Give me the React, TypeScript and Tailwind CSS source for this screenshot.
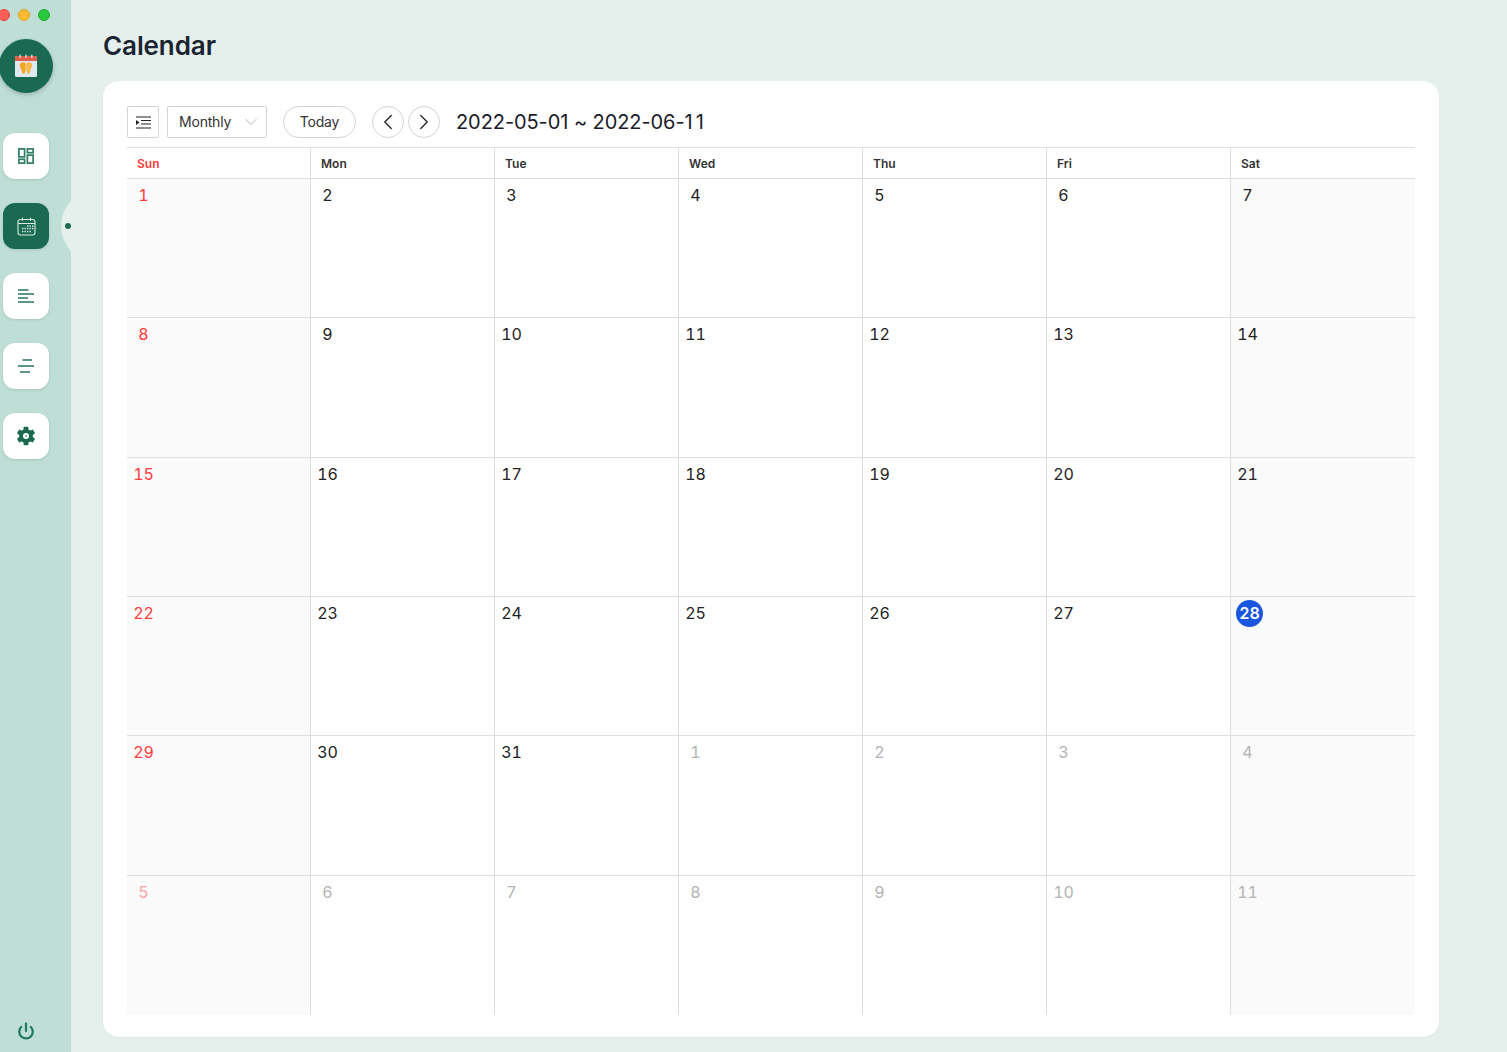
import { ChevronDown, ChevronLeft, ChevronRight, Power } from "lucide-react"

const green = "#196a50"

const weekdays = ["Sun", "Mon", "Tue", "Wed", "Thu", "Fri", "Sat"]

const days = [
  1, 2, 3, 4, 5, 6, 7,
  8, 9, 10, 11, 12, 13, 14,
  15, 16, 17, 18, 19, 20, 21,
  22, 23, 24, 25, 26, 27, 28,
  29, 30, 31, 1, 2, 3, 4,
  5, 6, 7, 8, 9, 10, 11,
]

function LogoIcon() {
  return (
    <svg width="24" height="24" viewBox="0 0 24 24">
      <rect x="1" y="2" width="22" height="21" rx="1.5" fill="#dfe9f2" />
      <path d="M1 3.500A1.500 1.500 0 0 1 2.500 2h19A1.500 1.500 0 0 1 23 3.500V7H1z" fill="#e0604c" />
      <rect x="5.500" y="0.500" width="1.300" height="3.500" rx="0.600" fill="#dfe3e6" />
      <rect x="11.400" y="0.500" width="1.300" height="3.500" rx="0.600" fill="#dfe3e6" />
      <rect x="17.200" y="0.500" width="1.300" height="3.500" rx="0.600" fill="#dfe3e6" />
      <path d="M11.700 9.200C10 7.900 5.800 7.500 5.800 11.300c0 2.200 1.500 3.200 1.800 4.800.3 1.500.5 4 2.100 4 1.400 0 1.200-2.800 2-3.500z" fill="#f6a623" />
      <path d="M12.300 9.200C14 7.900 18.200 7.500 18.200 11.300c0 2.200-1.500 3.200-1.800 4.800-.3 1.500-.5 4-2.100 4-1.400 0-1.200-2.800-2-3.500z" fill="#f9b94a" />
    </svg>
  )
}

function DashboardIcon() {
  return (
    <svg width="16" height="16" viewBox="0 0 16 16" fill="none" stroke="#2f7d64" strokeWidth="1.700">
      <rect x="0.900" y="0.900" width="5.700" height="8" />
      <rect x="9.400" y="0.900" width="5.700" height="3.800" />
      <rect x="0.900" y="11.300" width="5.700" height="3.800" />
      <rect x="9.400" y="7.100" width="5.700" height="8" />
    </svg>
  )
}

function CalendarIcon() {
  return (
    <svg width="19" height="19" viewBox="0 0 19 19" fill="none" stroke="#dcebe6" strokeWidth="1.100">
      <rect x="1" y="2.500" width="17" height="15.500" rx="2.500" />
      <path d="M1 6.500h17M5.500 .8v3M13.500 .8v3" />
      <path
        d="M10 9h1.400M12.500 9h1.400M15 9h1.400M5 11.500h1.400M7.500 11.500h1.400M10 11.500h1.400M12.500 11.500h1.400M15 11.500h1.400M5 14.500h1.400M7.500 14.500h1.400M10 14.500h1.400M12.500 14.500h1.400"
        strokeWidth="1.500"
      />
    </svg>
  )
}

function AlignLeftIcon() {
  return (
    <svg width="16" height="14" viewBox="0 0 16 14" fill="none" stroke="#23775c" strokeWidth="1.500">
      <path d="M0 1h10.500M0 5h16M0 9h10M0 13h16" />
    </svg>
  )
}

function AlignCenterIcon() {
  return (
    <svg width="16" height="14" viewBox="0 0 16 14" fill="none" stroke="#23775c" strokeWidth="1.500">
      <path d="M4.500 1h9.500M0 7h16M2 13h10" />
    </svg>
  )
}

function GearIcon() {
  return (
    <svg width="22" height="22" viewBox="0 0 24 24" fill={green}>
      <path
        fillRule="evenodd"
        d="M19.430 12.980c.04-.32.070-.64.070-.98s-.03-.66-.07-.98l2.110-1.650c.19-.15.240-.42.120-.64l-2-3.460c-.12-.22-.39-.3-.61-.22l-2.490 1c-.52-.4-1.080-.73-1.690-.98l-.38-2.650A.49.49 0 0 0 14 2h-4c-.25 0-.46.18-.49.42l-.38 2.650c-.61.25-1.170.59-1.690.98l-2.490-1c-.23-.09-.49 0-.61.22l-2 3.460c-.13.22-.07.49.12.64l2.110 1.650c-.04.32-.07.65-.07.98s.03.66.07.98l-2.110 1.650c-.19.15-.24.42-.12.64l2 3.460c.12.22.39.3.61.22l2.490-1c.52.4 1.080.73 1.690.98l.38 2.650c.03.24.24.42.49.42h4c.25 0 .46-.18.49-.42l.38-2.650c.61-.25 1.170-.59 1.690-.98l2.490 1c.23.09.49 0 .61-.22l2-3.460c.12-.22.07-.49-.12-.64l-2.110-1.650zM12 15.300a3.300 3.300 0 1 1 0-6.600 3.300 3.300 0 0 1 0 6.600z"
      />
      <circle cx="12" cy="12" r="1.300" opacity="0.5" />
    </svg>
  )
}

function IndentIcon() {
  return (
    <svg width="15" height="13" viewBox="0 0 15 13" fill="none" stroke="#222" strokeWidth="1.100">
      <path d="M0 1h15M5 4.500h10M5 8h10M0 12h15" />
      <path d="M0 4v5l3.500-2.500z" fill="#222" stroke="none" />
    </svg>
  )
}

function SideButton({ active, children }: { active?: boolean; children: React.ReactNode }) {
  return (
    <div
      className={`ml-[3px] flex h-[46px] w-[46px] items-center justify-center rounded-xl shadow-[0_1px_3px_rgba(0,0,0,0.12)] ${
        active ? "bg-[#196a50]" : "bg-white"
      }`}
    >
      {children}
    </div>
  )
}

export default function App() {
  return (
    <div className="flex h-[1052px] overflow-hidden bg-[#e5f0ed] font-['Inter',sans-serif] text-[#222]">
      <aside className="relative flex w-[71px] shrink-0 flex-col overflow-hidden bg-[#bfdfd6]">
        <div className="-ml-0.5 mt-[9px] flex gap-2">
          <span className="h-3 w-3 rounded-full border border-[#e0443e] bg-[#ff5f57]" />
          <span className="h-3 w-3 rounded-full border border-[#dea123] bg-[#febc2e]" />
          <span className="h-3 w-3 rounded-full border border-[#1aab29] bg-[#28c840]" />
        </div>
        <div className="-ml-px mt-[18px] flex h-[54px] w-[54px] items-center justify-center rounded-full bg-[#196a50] shadow-[0_2px_5px_rgba(0,0,0,0.2)]">
          <LogoIcon />
        </div>
        <div className="mt-10 flex flex-col gap-6">
          <SideButton>
            <DashboardIcon />
          </SideButton>
          <SideButton active>
            <CalendarIcon />
          </SideButton>
          <SideButton>
            <AlignLeftIcon />
          </SideButton>
          <SideButton>
            <AlignCenterIcon />
          </SideButton>
          <SideButton>
            <GearIcon />
          </SideButton>
        </div>
        <div className="absolute left-[61px] top-[190px] flex h-[72px] w-[72px] items-center rounded-full bg-[#e5f0ed] pl-1">
          <span className="h-1.5 w-1.5 rounded-full bg-[#196a50]" />
        </div>
        <div className="mb-3 ml-[17px] mt-auto text-[#1f7a5d]">
          <Power size={18} strokeWidth={3} />
        </div>
      </aside>

      <main className="flex-1 pl-8 pr-[68px]">
        <h1 className="mt-7 h-[53px] text-[26px] leading-9 font-semibold tracking-[-0.1px] text-[#1b2430]">
          Calendar
        </h1>
        <section className="h-[956px] rounded-2xl bg-white px-6 pt-[25px] shadow-[0_1px_2px_rgba(0,0,0,0.03)]">
          <div className="flex h-8 items-center">
            <div className="flex h-8 w-8 items-center justify-center rounded-[2px] border border-[#d4d4d4]">
              <IndentIcon />
            </div>
            <div className="ml-2 flex h-8 w-[100px] items-center justify-between rounded-[2px] border border-[#d4d4d4] pl-[11px] pr-[5px] text-sm tracking-[-0.2px] text-[#333]">
              <span>Monthly</span>
              <ChevronDown size={20} strokeWidth={0.9} className="text-[#999]" />
            </div>
            <div className="ml-4 flex h-8 w-[73px] items-center justify-center rounded-full border border-[#d4d4d4] text-sm tracking-[-0.2px] text-[#333]">
              Today
            </div>
            <div className="ml-4 flex h-8 w-8 items-center justify-center rounded-full border border-[#d4d4d4]">
              <ChevronLeft size={26} strokeWidth={1.2} />
            </div>
            <div className="ml-1 flex h-8 w-8 items-center justify-center rounded-full border border-[#d4d4d4]">
              <ChevronRight size={26} strokeWidth={1.2} />
            </div>
            <div className="ml-4 text-xl tracking-[-0.08px] text-[#1b1b2b]">
              2022-05-01 ~ 2022-06-<span className="tracking-[3px]">1</span>1
            </div>
          </div>

          <div className="mt-[9px] grid h-[32px] grid-cols-7 border-y border-[#dedede]">
            {weekdays.map((d, i) => (
              <div
                key={d}
                className={`flex items-center pl-2.5 pt-px text-xs font-semibold ${i < 6 ? "border-r border-[#dedede]" : ""} ${
                  i === 0 ? "text-[#ff3b3b]" : "text-[#333]"
                }`}
              >
                {d}
              </div>
            ))}
          </div>

          <div className="grid h-[836px] grid-cols-7 grid-rows-6">
            {days.map((day, i) => {
              const col = i % 7
              const row = Math.floor(i / 7)
              const muted = i >= 31
              const today = i === 27
              let color = "text-[#222]"
              if (col === 0) color = muted ? "text-[#f7a6a6]" : "text-[#ff3b3b]"
              else if (muted) color = "text-[#b3b3b3]"
              return (
                <div
                  key={i}
                  className={`pl-[3px] pt-0.5 ${col < 6 ? "border-r border-[#dedede]" : ""} ${
                    row < 5 ? "border-b border-[#dedede]" : ""
                  } ${col === 0 || col === 6 ? "bg-[#fafafa]" : ""}`}
                >
                  <div
                    className={`flex w-[27px] items-center justify-center rounded-full text-base tabular-nums ${
                      today ? "ml-0.5 mt-px h-[27px] bg-[#1a56e0] font-semibold text-white" : `h-7 ${color}`
                    }`}
                  >
                    {day}
                  </div>
                </div>
              )
            })}
          </div>
        </section>
      </main>
    </div>
  )
}
